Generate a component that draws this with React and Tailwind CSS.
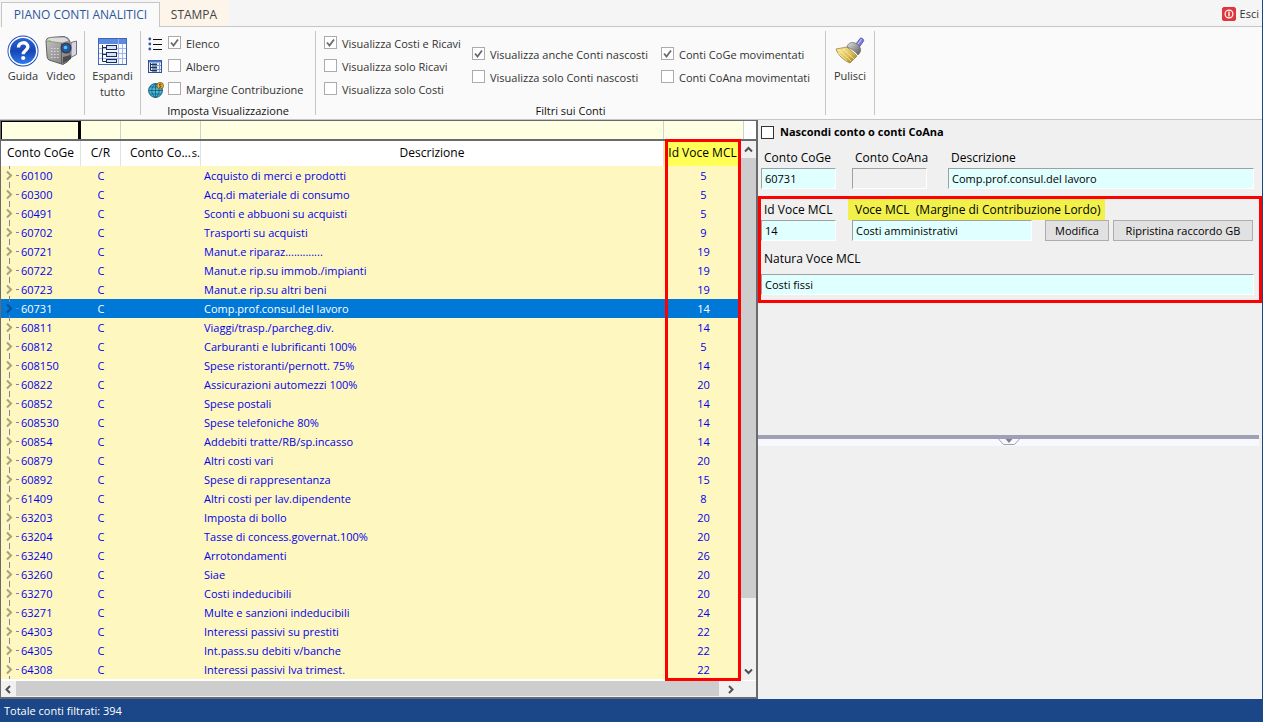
import React from 'react';

const ROWS = [
    ['60100', 'Acquisto di merci e prodotti', 5],
    ['60300', 'Acq.di materiale di consumo', 5],
    ['60491', 'Sconti e abbuoni su acquisti', 5],
    ['60702', 'Trasporti su acquisti', 9],
    ['60721', 'Manut.e riparaz.............', 19],
    ['60722', 'Manut.e rip.su immob./impianti', 19],
    ['60723', 'Manut.e rip.su altri beni', 19],
    ['60731', 'Comp.prof.consul.del lavoro', 14],
    ['60811', 'Viaggi/trasp./parcheg.div.', 14],
    ['60812', 'Carburanti e lubrificanti 100%', 5],
    ['608150', 'Spese ristoranti/pernott. 75%', 14],
    ['60822', 'Assicurazioni automezzi 100%', 20],
    ['60852', 'Spese postali', 14],
    ['608530', 'Spese telefoniche 80%', 14],
    ['60854', 'Addebiti tratte/RB/sp.incasso', 14],
    ['60879', 'Altri costi vari', 20],
    ['60892', 'Spese di rappresentanza', 15],
    ['61409', 'Altri costi per lav.dipendente', 8],
    ['63203', 'Imposta di bollo', 20],
    ['63204', 'Tasse di concess.governat.100%', 20],
    ['63240', 'Arrotondamenti', 26],
    ['63260', 'Siae', 20],
    ['63270', 'Costi indeducibili', 20],
    ['63271', 'Multe e sanzioni indeducibili', 24],
    ['64303', 'Interessi passivi su prestiti', 22],
    ['64305', 'Int.pass.su debiti v/banche', 22],
    ['64308', 'Interessi passivi Iva trimest.', 22],
];

const SELECTED = '60731';

/* ---------- icons ---------- */

const HelpIcon = () => (
    <svg viewBox="0 0 32 32" className="size-8">
        <defs>
            <linearGradient id="help" x1="0" y1="0" x2="0" y2="1">
                <stop offset="0" stopColor="#2a62d8" />
                <stop offset="0.5" stopColor="#1746b4" />
                <stop offset="1" stopColor="#2f7af0" />
            </linearGradient>
        </defs>
        <circle cx="16" cy="16" r="15.5" fill="#1c49b0" />
        <circle cx="16" cy="16" r="14.6" fill="#fff" />
        <circle cx="16" cy="16" r="13" fill="url(#help)" />
        <path d="M11.5 12.4c0-6 9.4-6 9.4-.6 0 3.8-4.700 3.600-4.700 7.400" fill="none" stroke="#fff" strokeWidth="3.4" />
        <circle cx="16.2" cy="23" r="2.1" fill="#fff" />
    </svg>
);

const CameraIcon = () => (
    <svg viewBox="0 0 32 32" className="size-8">
        <defs>
            <linearGradient id="cam" x1="0" y1="0" x2="1" y2="1">
                <stop offset="0" stopColor="#c4c4c4" />
                <stop offset="1" stopColor="#787878" />
            </linearGradient>
        </defs>
        <path d="M26 7.500l5.500-1.500v13.500l-5.500 3z" fill="#d4d4ea" stroke="#555" strokeWidth="0.8" />
        <path d="M1 6q0-3 4-3.500L19 1.500q5 1 6 5v17q-1 3-7 6L4 25q-2-1-2-4z" fill="url(#cam)" stroke="#555" strokeWidth="0.9" />
        <path d="M1.500 6q0-3 4-3.500L19 2q4 1 5 4l-7 2z" fill="#dcdcdc" stroke="#777" strokeWidth="0.6" />
        <path d="M16.500 8v21" stroke="#5f5f5f" />
        <path d="M6 13.500h8M6 16.500h8M6 19.500h8M6 22.500h8" stroke="#dadada" strokeWidth="1.2" strokeDasharray="1.5 1.5" />
        <circle cx="21" cy="13" r="5.500" fill="#3c3c3c" />
        <circle cx="21" cy="13" r="4" fill="#1b5cae" />
        <circle cx="20.5" cy="12.500" r="1.800" fill="#61c2f6" />
        <path d="M18 22l8-2v4l-8 4z" fill="#4c4c4c" />
        <circle cx="4.500" cy="6" r="1.100" fill="#6fc23c" />
    </svg>
);

const TreeGridIcon = () => (
    <svg viewBox="0 0 29 27" className="w-[29px] h-[27px]">
        <rect x="0.5" y="0.5" width="28" height="26" fill="#f8faff" stroke="#3f68b8" />
        <rect x="1" y="1" width="27" height="5" fill="#5b8ae0" />
        <path d="M20.500 1v25M24.500 6v20M1 10.500h27M1 15.500h27M1 20.500h27" stroke="#9db8e6" />
        <path d="M4.500 7v16.500h4M4.500 9.500h4M4.500 16.500h4" fill="none" stroke="#1d2f55" />
        <g fill="#d3e2fa" stroke="#1d2f55">
            <rect x="8.5" y="7.5" width="10" height="4" />
            <rect x="8.5" y="14.5" width="10" height="4" />
            <rect x="8.5" y="21.5" width="10" height="3" />
        </g>
    </svg>
);

const TreeSmallIcon = () => (
    <svg viewBox="0 0 14 13" className="w-3.5 h-[13px]">
        <rect x="0.5" y="0.5" width="13" height="12" fill="#e6eefb" stroke="#2f4f92" />
        <path d="M1 1.500h12" stroke="#4b78cc" strokeWidth="2" />
        <path d="M11.500 3v9M9 5.500h4M9 9.500h4" stroke="#7f9dd4" />
        <path d="M2.500 3v7.500h2M2.500 4.500h2M2.500 7.500h2" fill="none" stroke="#1d2f55" />
        <path d="M4 4.500h5M4 7.500h5M4 10.500h5" stroke="#22355f" strokeWidth="2" />
    </svg>
);

const ListIcon = () => (
    <svg viewBox="0 0 14 14" className="size-3.5">
        <path d="M5 2.500h9M5 7.500h9M5 12.500h9" stroke="#111" />
        <g fill="#3b56b0">
            <circle cx="1.8" cy="2" r="1.4" />
            <circle cx="1.8" cy="7" r="1.4" />
            <circle cx="1.8" cy="12" r="1.4" />
        </g>
    </svg>
);

const GlobeIcon = () => (
    <svg viewBox="0 0 16 16" className="size-4">
        <circle cx="7.5" cy="8.5" r="6.9" fill="#48b9dc" stroke="#155c7c" />
        <path d="M7.500 1.600v14M.6 8.500h14M2 5h11M2 12h11M7.500 1.600c-5 4-5 10 0 14M7.500 1.600c5 4 5 10 0 14" fill="none" stroke="#12506c" strokeWidth="0.7" />
        <circle cx="12.200" cy="3.700" r="3.300" fill="#e8b640" stroke="#7a5310" strokeWidth="0.8" />
        <path d="M13.400 2.400c-2.400-1-2.600 1-1.200 1.400s1.200 2-1.200 1.300" fill="none" stroke="#4a2f05" strokeWidth="0.9" />
    </svg>
);

const BroomIcon = () => (
    <svg viewBox="0 0 32 32" className="size-8">
        <defs>
            <linearGradient id="bristle" x1="0" y1="0" x2="1" y2="1">
                <stop offset="0" stopColor="#fff3a8" />
                <stop offset="0.6" stopColor="#d9bb4e" />
                <stop offset="1" stopColor="#8a6a1c" />
            </linearGradient>
            <linearGradient id="ferrule" x1="0" y1="0" x2="1" y2="1">
                <stop offset="0" stopColor="#e6e6e6" />
                <stop offset="1" stopColor="#555" />
            </linearGradient>
        </defs>
        <path d="M20.500 11l5.500-7.500c1-1.300 4.500 1 3.500 2.500L24 14z" fill="#7d7fd6" stroke="#44469a" strokeWidth="0.8" />
        <path d="M22 11.500L27.500 4" stroke="#bfc0f5" strokeWidth="1.2" />
        <path d="M2 14l11-2 10 9-7 7C9 25 4 20 2 14z" fill="url(#bristle)" stroke="#94762a" strokeWidth="0.7" />
        <path d="M5 15l12 11M9 14l11 10M4 18l9 8" stroke="#fff6c4" strokeWidth="0.7" />
        <path d="M13 12c1-5 7-6 11-2s3 7 0 10c-3-4-6-6-11-8z" fill="url(#ferrule)" stroke="#666" strokeWidth="0.7" />
    </svg>
);

const PowerIcon = () => (
    <svg viewBox="0 0 14 14" className="size-3.5">
        <rect x="0.5" y="0.5" width="13" height="13" rx="1.5" fill="#e2383c" stroke="#d8383c" />
        <circle cx="7" cy="7" r="3.9" fill="none" stroke="#fff" strokeWidth="1.2" />
        <path d="M7 4.500v5" stroke="#fff" strokeWidth="1.4" />
    </svg>
);

const Chevron = ({ d }) => (
    <svg viewBox="0 0 9 9" className="size-[9px]">
        <path d={d} fill="none" stroke="#505050" strokeWidth="2" />
    </svg>
);

/* ---------- controls ---------- */

const Check = ({ label, icon, checked = false }) => (
    <label className="flex items-center h-[23px] whitespace-nowrap text-[#333]">
        {icon && <span className="w-5 flex shrink-0">{icon}</span>}
        <span className="relative flex shrink-0 mb-0.5 mr-[5px]">
            <input
                type="checkbox"
                defaultChecked={checked}
                className="peer appearance-none size-[13px] border border-[#ababab] bg-white"
            />
            <svg viewBox="0 0 13 13" className="absolute inset-0 size-[13px] hidden peer-checked:block pointer-events-none">
                <path d="M3 6.500l2.500 3L10 3.500" fill="none" stroke="#6a6a6a" strokeWidth="1.8" />
            </svg>
        </span>
        {label}
    </label>
);

const BigButton = ({ icon, children, className = '' }) => (
    <button type="button" className={`flex flex-col items-center text-[#333] leading-4 ${className}`}>
        {icon}
        <span className="mt-px">{children}</span>
    </button>
);

const Group = ({ title, children, className = '' }) => (
    <div className={`flex shrink-0 flex-col border-r border-[#c6c6c6] ${className}`}>
        {children}
        {title && <div className="text-center leading-4 text-[#111]">{title}</div>}
    </div>
);

const inputBase = 'h-[21px] w-full min-w-0 pl-[3px] border border-t-[#a0a0a0] border-l-[#a0a0a0] border-r-white border-b-white outline-none';

const Field = ({ id, label, value, className = '', highlight = false, plain = false }) => (
    <div className={`flex flex-col ${className}`}>
        <label htmlFor={id} className="h-[21px] flex items-center whitespace-pre text-[12px]">
            <span className={highlight ? 'shrink-0 bg-[#f2f14c] -ml-1 pl-[7px] w-[257px] leading-[21px]' : 'pl-[3px]'}>{label}</span>
        </label>
        <input id={id} defaultValue={value} className={`${inputBase} ${plain ? 'bg-[#f0f0f0]' : 'bg-[#e0ffff]'}`} />
    </div>
);

/* ---------- page parts ---------- */

const Tabs = () => (
    <div className="flex h-[27px] shrink-0 items-end bg-[#f5f5f5] pl-px">
        <div role="tablist" className="flex self-stretch items-end text-[12px]">
            <button type="button" role="tab" aria-selected="true" className="h-[25px] w-[159px] border border-b-0 border-[#c6c6c6] bg-[#fafafa] text-[#2b579a]">
                PIANO CONTI ANALITICI
            </button>
            <button type="button" role="tab" aria-selected="false" className="h-[27px] w-[68px] pt-[3px] border-b border-[#c6c6c6] bg-[#fdf5e9] text-[#444]">
                STAMPA
            </button>
        </div>
        <div className="flex-1 self-stretch flex items-center justify-end border-b border-[#c6c6c6] pt-0.5 pr-[3px]">
            <button type="button" className="flex items-center gap-1 text-[#333]">
                <PowerIcon />
                Esci
            </button>
        </div>
    </div>
);

const Ribbon = () => (
    <div className="flex h-[93px] shrink-0 border-b border-[#c6c6c6] bg-[#fafafa] pt-1 pb-1">
        <Group className="w-[85px]">
            <div className="flex pt-1 pl-1">
                <BigButton icon={<HelpIcon />} className="w-[38px]">Guida</BigButton>
                <BigButton icon={<CameraIcon />} className="w-[38px]">Video</BigButton>
            </div>
        </Group>
        <Group className="w-14 items-center">
            <BigButton icon={<span className="h-8 flex items-center"><TreeGridIcon /></span>} className="pt-1">
                Espandi
                <br />
                tutto
            </BigButton>
        </Group>
        <Group title="Imposta Visualizzazione" className="w-[175px]">
            <div className="h-[72px] shrink-0 pl-[7px] pt-px">
                <Check label="Elenco" checked icon={<ListIcon />} />
                <Check label="Albero" icon={<TreeSmallIcon />} />
                <Check label="Margine Contribuzione" icon={<GlobeIcon />} />
            </div>
        </Group>
        <Group title="Filtri sui Conti" className="w-[510px]">
            <div className="flex h-[72px] shrink-0 pl-2 pt-px">
                <div className="w-[148px]">
                    <Check label="Visualizza Costi e Ricavi" checked />
                    <Check label="Visualizza solo Ricavi" />
                    <Check label="Visualizza solo Costi" />
                </div>
                <div className="w-[189px] pt-[11px]">
                    <Check label="Visualizza anche Conti nascosti" checked />
                    <Check label="Visualizza solo Conti nascosti" />
                </div>
                <div className="pt-[11px]">
                    <Check label="Conti CoGe movimentati" checked />
                    <Check label="Conti CoAna movimentati" />
                </div>
            </div>
        </Group>
        <Group className="w-[49px] items-center">
            <BigButton icon={<BroomIcon />} className="pt-1">Pulisci</BigButton>
        </Group>
    </div>
);

const FilterRow = () => (
    <div className="flex h-5 shrink-0 border-b-2 border-[#69696e] bg-[#ffffe1]">
        <input aria-label="Filtro Conto CoGe" className="w-20 border-t border-l border-r-[3px] border-black outline-none" />
        <input aria-label="Filtro C/R" className="w-10 border-r border-[#d0d0d0] outline-none" />
        <input aria-label="Filtro Conto CoAna" className="w-20 border-r border-[#d0d0d0] outline-none" />
        <input aria-label="Filtro Descrizione" className="flex-1 min-w-0 border-r border-[#d0d0d0] outline-none" />
        <input aria-label="Filtro Id Voce MCL" className="w-20 border-r border-[#d0d0d0] outline-none" />
        <div className="w-3 bg-white" />
    </div>
);

const TreeMark = ({ selected }) => (
    <svg viewBox="0 0 20 19" className="w-5 h-[19px] shrink-0">
        <path d="M6 5.500l4 4-4 4" fill="none" stroke={selected ? '#0a4f92' : '#a8a27c'} strokeWidth="2" />
        <path d="M8.500 0v3M8.500 16v3" stroke="#8080a8" />
        <path d="M15 9.500h3" stroke="#7a7ac0" />
    </svg>
);

const AccountsTable = () => (
    <table className="w-full table-fixed border-separate border-spacing-0">
        <colgroup>
            <col className="w-20" />
            <col className="w-10" />
            <col className="w-20" />
            <col />
            <col className="w-[77px]" />
        </colgroup>
        <thead>
            <tr className="h-[25px] bg-white whitespace-nowrap text-[12px]">
                <th className="p-0 pb-0.5 font-normal border-r border-[#e2e2e2]">Conto CoGe</th>
                <th className="p-0 pb-0.5 font-normal border-r border-[#e2e2e2]">C/R</th>
                <th className="p-0 pb-0.5 font-normal border-r border-[#e2e2e2]">
                    <div className="flex justify-end gap-px">
                        <span>Conto Co...</span>
                        <span className="text-[11px]">s.</span>
                    </div>
                </th>
                <th className="p-0 pb-0.5 font-normal border-r border-[#e2e2e2]">Descrizione</th>
                <th className="p-0 pb-0.5 font-normal bg-[#ffff56]">Id Voce MCL</th>
            </tr>
        </thead>
        <tbody>
            {ROWS.map(([code, desc, mcl]) => {
                const selected = code === SELECTED;
                return (
                    <tr key={code} className={selected ? 'h-[19px] bg-[#0078d7] text-white' : 'h-[19px] bg-[#fff7c0] text-[#0000f0]'}>
                        <td className="p-0">
                            <div className="flex items-center h-[19px]">
                                <TreeMark selected={selected} />
                                {code}
                            </div>
                        </td>
                        <td className="p-0 text-center leading-[19px]">C</td>
                        <td className="p-0" />
                        <td className="p-0 pl-[3px] leading-[19px] whitespace-nowrap">{desc}</td>
                        <td className="p-0 pl-0.5 text-center leading-[19px]">{mcl}</td>
                    </tr>
                );
            })}
        </tbody>
    </table>
);

const AccountsPanel = () => (
    <div className="relative flex flex-1 min-w-0 flex-col border-t border-l border-r-2 border-b-2 border-[#69696e] bg-white">
        <FilterRow />
        <div className="flex flex-1 min-h-0 pb-px">
            <div className="flex-1 min-w-0 overflow-hidden">
                <AccountsTable />
            </div>
            <div className="w-[15px] flex flex-col items-center bg-[#f0f0f0]">
                <button type="button" aria-label="Su" className="h-[17px] shrink-0 flex items-center">
                    <Chevron d="M1 6.500l3.500-3.500L8 6.500" />
                </button>
                <div className="w-full h-[440px] bg-[#cdcdcd]" />
                <button type="button" aria-label="Giù" className="h-[17px] shrink-0 mt-auto flex items-center">
                    <Chevron d="M1 2.500l3.500 3.500L8 2.500" />
                </button>
            </div>
        </div>
        <div className="flex h-4 shrink-0 bg-[#f0f0f0]">
            <button type="button" aria-label="Sinistra" className="w-[15px] flex items-center justify-center">
                <Chevron d="M6 1L2.500 4.500 6 8" />
            </button>
            <div className="flex-1 h-[15px] bg-[#cdcdcd]" />
            <button type="button" aria-label="Destra" className="w-[22px] flex items-center justify-center">
                <Chevron d="M3 1l3.500 3.500L3 8" />
            </button>
            <div className="w-[15px]" />
        </div>
        {/* Frame around the MCL column */}
        <div className="absolute top-[18px] bottom-4 right-[15px] w-[76px] border-[3px] border-[#f00] pointer-events-none" />
    </div>
);

const DetailPanel = () => (
    <div className="w-[504px] shrink-0 flex flex-col bg-[#f0f0f0]">
        <div className="h-[315px] shrink-0">
            <label className="flex items-center h-6 pl-[3px] gap-[6px] font-bold">
                <input type="checkbox" className="appearance-none size-[13px] border border-[#333] bg-white" />
                Nascondi conto o conti CoAna
            </label>
            <div className="flex pl-[3px] pr-2 pt-[3px] h-[52px]">
                <Field id="coge" label="Conto CoGe" value="60731" className="w-[75px]" />
                <Field id="coana" label="Conto CoAna" value="" plain className="w-[75px] ml-4" />
                <Field id="descr" label="Descrizione" value="Comp.prof.consul.del lavoro" className="flex-1 ml-[21px]" />
            </div>
            <div className="border-[3px] border-[#f00] h-[107px]">
                <div className="flex items-end pr-1.5">
                    <Field id="idmcl" label="Id Voce MCL" value="14" className="w-[75px]" />
                    <Field id="mcl" label="Voce MCL  (Margine di Contribuzione Lordo)" value="Costi amministrativi" highlight className="w-[180px] ml-4" />
                    <button type="button" className="ml-[13px] w-16 h-[21px] border border-[#adadad] bg-[#e1e1e1]">Modifica</button>
                    <button type="button" className="ml-1 flex-1 h-[21px] border border-[#adadad] bg-[#e1e1e1] whitespace-nowrap">Ripristina raccordo GB</button>
                </div>
                <div className="flex flex-col pt-[7px] pr-[5px]">
                    <label htmlFor="natura" className="h-[26px] pl-[3px] leading-[21px] text-[12px]">Natura Voce MCL</label>
                    <input id="natura" defaultValue="Costi fissi" className={`${inputBase} bg-[#e0ffff]`} />
                </div>
            </div>
        </div>
        {/* Splitter */}
        <div className="mr-[3px] h-[11px] shrink-0 border-t-4 border-[#a0a0b4] bg-[#f8f8ff] flex justify-center">
            <svg viewBox="0 0 22 7" className="w-[22px] h-[7px]">
                <path d="M.5 0l5 5.500h11l5-5.500" fill="#f8f8ff" stroke="#a0a0b4" />
                <path d="M7.500 0h7L11 4z" fill="#808090" />
            </svg>
        </div>
    </div>
);

export default function App() {
    return (
        <div className="h-screen flex flex-col overflow-hidden border-r border-[#1b4788] bg-[#f0f0f0] text-black text-[11px] leading-4 font-['Open_Sans','Noto_Sans',sans-serif]">
            <Tabs />
            <Ribbon />
            <div className="flex flex-1 min-h-0">
                <AccountsPanel />
                <DetailPanel />
            </div>
            <div className="h-[23px] shrink-0 bg-[#1b4788] pl-1 leading-[23px] text-white">Totale conti filtrati: 394</div>
        </div>
    );
}
